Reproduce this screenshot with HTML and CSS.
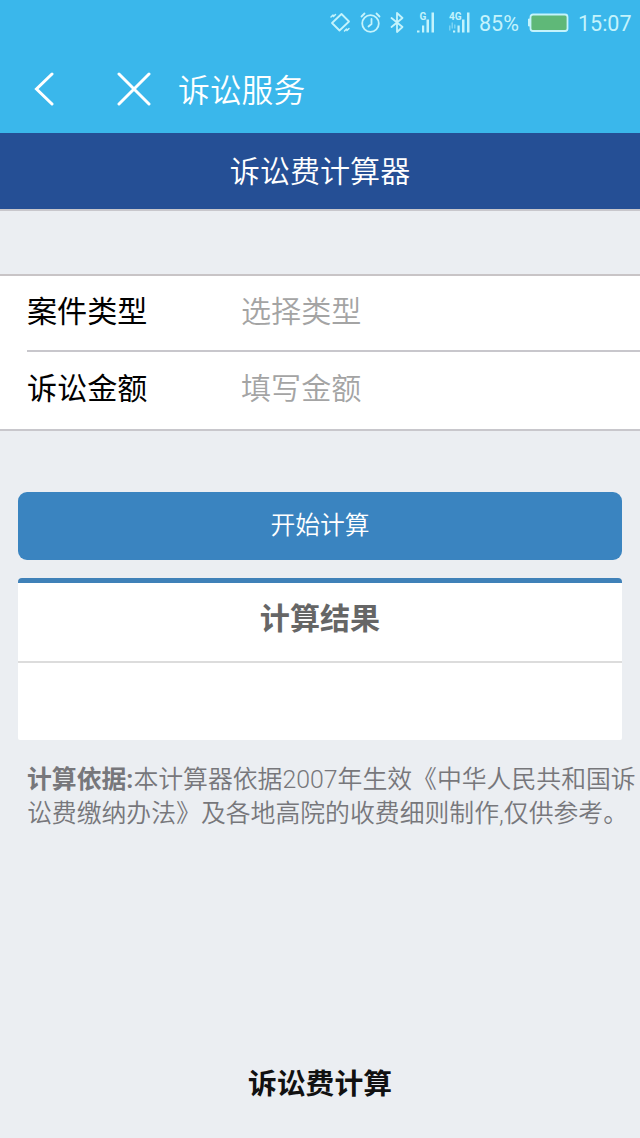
FILE: index.html
```
<!DOCTYPE html>
<html lang="zh-CN">
<head>
<meta charset="utf-8">
<meta name="viewport" content="width=device-width, initial-scale=1.0">
<title>诉讼费计算器</title>
<link rel="stylesheet" href="styles.css">
</head>
<body>

<!-- status bar -->
<div class="status">
  <svg class="status-icons" width="144" height="30" viewBox="328 7.500 144 30">
    <g fill="none" stroke="#c4f3fc" stroke-width="1.8" stroke-linecap="round" stroke-linejoin="round">
      <!-- vibrate -->
      <path d="M341.500 13.500L349 21L339.500 30L332 22.500Z"/>
      <path stroke-width="1.500" d="M331 16.500l2-2 .5 1.500 2-2M344.500 30.500l2-2 .5 1.500 2-2"/>
      <!-- alarm -->
      <circle cx="370.500" cy="23" r="8.300"/>
      <path d="M371.500 18.500v5l-3 2.500M361.500 16l3-3M376.500 13l3 3"/>
      <!-- bluetooth -->
      <path d="M391.500 17.500l11 9-5.500 5V12.500l5.500 5-11 9"/>
    </g>
    <g fill="#c4f3fc">
      <!-- sim 1 -->
      <path d="M417 30h2.500v2H417zM422 25h2.200v7H422zM426.500 19h2.500v13h-2.500zM431.500 12h2.500v20h-2.500z"/>
      <text class="net" x="419.500" y="19.500">G</text>
      <!-- sim 2 -->
      <path d="M453 30h2.200v2H453zM457.500 25h2.200v7h-2.200zM462 19h2.500v13H462zM467 12h2.500v20H467z"/>
      <path opacity=".45" d="M449 25h1.500v5H449zM451.500 22h1.500v6h-1.500zM454 24h1.500v4H454z"/>
      <text class="net" x="449" y="19.500">4G</text>
    </g>
  </svg>
  <span class="percent">85%</span>
  <svg class="battery" width="42" height="20" viewBox="0 0 42 20">
    <path d="M3 6H1.500v7H3" fill="#c4f3fc" stroke="#c4f3fc"/>
    <rect x="3.500" y="1.500" width="37" height="16.500" rx="2.500" fill="#5fb878" stroke="#c4f3fc" stroke-width="1.800"/>
  </svg>
  <span class="time">15:07</span>
</div>

<!-- app nav -->
<div class="nav">
  <svg class="back" width="20" height="34" viewBox="0 0 20 34"><path d="M18 2L2.500 17L18 32"/></svg>
  <svg class="close" width="34" height="34" viewBox="0 0 34 34"><path d="M2 2L32 32M32 2L2 32"/></svg>
  <span>诉讼服务</span>
</div>

<h1 class="title">诉讼费计算器</h1>

<form class="fields">
  <div class="row">
    <label for="type">案件类型</label>
    <input id="type" type="text" placeholder="选择类型" readonly>
  </div>
  <div class="row">
    <label for="money">诉讼金额</label>
    <input id="money" type="text" placeholder="填写金额">
  </div>
</form>

<button class="btn" type="button">开始计算</button>

<div class="result">
  <h2>计算结果</h2>
  <div class="result-body"></div>
</div>

<p class="note"><b>计算依据:</b>本计算器依据2007年生效《中华人民共和国诉讼费缴纳办法》及各地高院的收费细则制作,仅供参考。</p>

<div class="footer">诉讼费计算</div>

</body>
</html>
```
FILE: styles.css
```
* {
  box-sizing: border-box;
}

body {
  display: flex;
  flex-direction: column;
  height: 1138px;
  margin: 0;
  overflow: hidden;
  background: #ebeef2;
  font-family: Roboto, "Noto Sans CJK SC", sans-serif;
}

/* status bar */
.status {
  display: flex;
  align-items: center;
  height: 45px;
  padding-left: 328px;
  background: #3ab7eb;
  color: #c4f3fc;
  font-size: 21.5px;
}

.status-icons {
  flex: none;
}

.net {
  font-size: 10px;
  font-weight: bold;
}

.percent,
.time {
  padding-top: 2px;
}

.percent {
  width: 48px;
  margin-left: 7px;
}

.battery {
  flex: none;
  margin-right: 9px;
}

.nav {
  display: flex;
  align-items: center;
  height: 88px;
  padding-left: 34px;
  background: #3ab7eb;
  color: #fff;
  font-size: 31.8px;
  font-weight: 350;
}

.nav span {
  padding-bottom: 3px;
}

.nav svg {
  fill: none;
  stroke: #fff;
  stroke-width: 3;
  stroke-linecap: round;
}

.back {
  margin-right: 63px;
}

.close {
  margin-right: 27px;
}

.title {
  height: 78px;
  margin: 0;
  border-bottom: 2px solid #c8c7cc;
  background: #254f95;
  color: #fff;
  font-size: 30.1px;
  font-weight: 350;
  line-height: 77px;
  text-align: center;
}

.fields {
  margin-top: 63px;
  border-top: 2px solid #c8c4c6;
  border-bottom: 2px solid #c8c7cc;
  background: #fff;
}

.row {
  display: flex;
  align-items: center;
  height: 77px;
  margin-left: 27px;
  padding-bottom: 4px;
}

.row:first-child {
  height: 76px;
  border-bottom: 2px solid #c8c7cc;
}

.row label {
  width: 214px;
  padding-bottom: 5px;
  font-size: 30.1px;
}

.row input {
  flex: 1;
  min-width: 0;
  padding: 0;
  border: 0;
  outline: 0;
  font-family: inherit;
  font-size: 30.1px;
  font-weight: 350;
}

.row input::placeholder {
  color: #a4a4a4;
}

.btn {
  height: 68px;
  margin: 61px 18px 0;
  padding: 0 0 6px;
  border: 0;
  border-radius: 9px;
  background: #3a84c0;
  color: #fff;
  font-family: inherit;
  font-size: 24.8px;
  font-weight: 350;
}

.result {
  margin: 18px 18px 0;
  border-top: 5px solid #3f81b8;
  border-radius: 4px 4px 2px 2px;
  background: #fff;
}

.result h2 {
  height: 80px;
  margin: 0;
  border-bottom: 2px solid #dcdcdc;
  color: #666;
  font-size: 30.1px;
  line-height: 72px;
  text-align: center;
}

.result-body {
  height: 77px;
}

.note {
  margin: 23px 0 0 27px;
  color: #77777b;
  font-size: 24.85px;
  font-weight: 350;
  line-height: 34px;
}

.footer {
  margin-top: auto;
  padding-bottom: 33px;
  color: #111;
  font-size: 28.8px;
  font-weight: bold;
  line-height: 42px;
  text-align: center;
}
```
